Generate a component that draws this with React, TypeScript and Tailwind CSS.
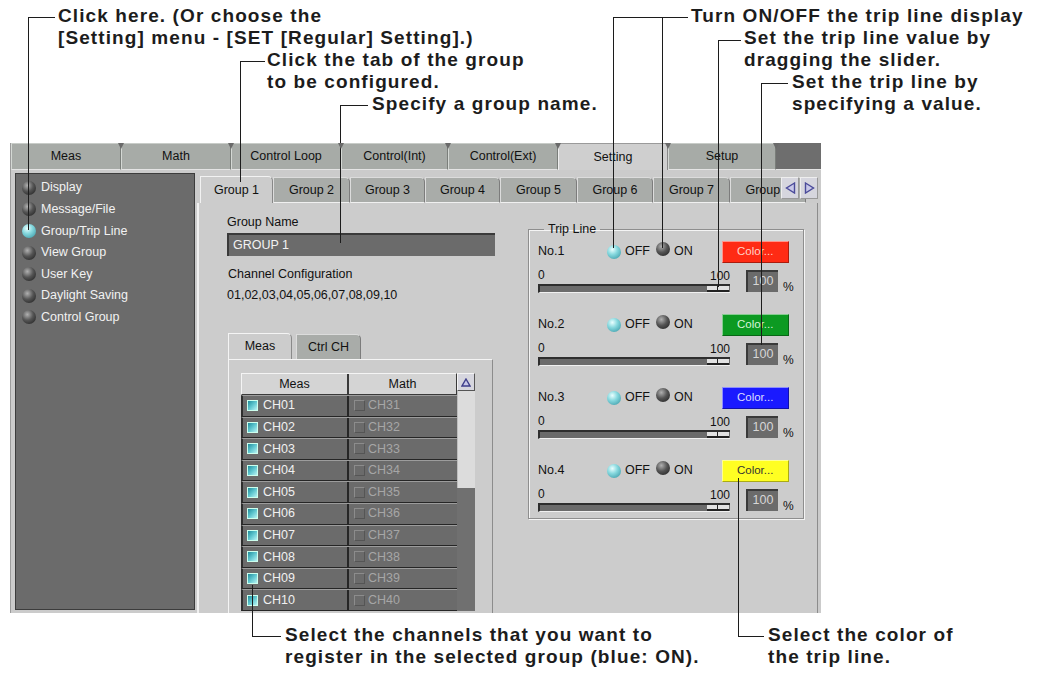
import React from "react";

const topTabs = [
  { label: "Meas", w: "w-[110px]" },
  { label: "Math", w: "w-[110px]" },
  { label: "Control Loop", w: "w-[110px]" },
  { label: "Control(Int)", w: "w-[107px]" },
  { label: "Control(Ext)", w: "w-[110px]" },
  { label: "Setting", w: "w-[110px]", active: true },
  { label: "Setup", w: "w-[108px]" },
];

const menuItems = [
  "Display",
  "Message/File",
  "Group/Trip Line",
  "View Group",
  "User Key",
  "Daylight Saving",
  "Control Group",
];

const groupTabs = [
  { label: "Group 1", w: "w-[73px]", active: true },
  { label: "Group 2", w: "w-[77px]" },
  { label: "Group 3", w: "w-[75px]" },
  { label: "Group 4", w: "w-[75px]" },
  { label: "Group 5", w: "w-[77px]" },
  { label: "Group 6", w: "w-[76px]" },
  { label: "Group 7", w: "w-[77px]" },
  { label: "Group 8", w: "w-[76px]" },
];

const tripLines = [
  { no: "No.1", btn: "bg-[#ff2b14] text-[#ffd2c8]" },
  { no: "No.2", btn: "bg-[#0c9a22] text-[#d8f4d8]" },
  { no: "No.3", btn: "bg-[#1a1aff] text-[#dcdcff]" },
  { no: "No.4", btn: "bg-[#ffff22] text-[#333]" },
];

const channels = ["01", "02", "03", "04", "05", "06", "07", "08", "09", "10"];

function Orb({ on }: { on?: boolean }) {
  return (
    <span
      className={`inline-block w-[14px] h-[14px] rounded-full shrink-0 ${
        on
          ? "bg-[radial-gradient(circle_at_38%_32%,#eaffff_0%,#86d8de_40%,#2f909e_100%)]"
          : "bg-[radial-gradient(circle_at_38%_32%,#b0b0b0_0%,#555_45%,#1a1a1a_100%)]"
      }`}
    />
  );
}

function Check({ on }: { on?: boolean }) {
  return (
    <span
      className={`inline-block w-[11px] h-[11px] shrink-0 ${
        on
          ? "bg-[linear-gradient(135deg,#1f8d9c_0%,#5fc6cf_50%,#b8f4f4_100%)] border border-[#cfe]"
          : "border border-[#8c8c8c] border-r-[#555] border-b-[#555]"
      }`}
    />
  );
}

function Window() {
  return (
    <div className="w-[811px] h-[470px] flex flex-col bg-[#cbcbcb] text-[12.5px] text-[#111] border-l border-[#9c9c9c]">
      {/* top tabs */}
      <div className="flex h-[27px] shrink-0">
        {topTabs.map((t) => (
          <div
            key={t.label}
            className={`relative ${t.w} flex items-center justify-center border-t border-l border-r ${
              t.active
                ? "bg-[#cfcfcf] border-t-[#9a9a9a] border-l-[#eeeeee] border-r-[#8a8a8a]"
                : "bg-[#a7aba7] border-t-[#c8ccc8] border-l-[#d4d8d4] border-r-[#7a7e7a] border-b border-b-[#e4e4e4]"
            }`}
          >
            {t.label}
            <span className="absolute top-[-1px] right-[-4px] z-10 w-0 h-0 border-l-[3px] border-r-[3px] border-t-[6px] border-l-transparent border-r-transparent border-t-[#6a6a6a]" />
          </div>
        ))}
        <div className="flex-1 bg-[#6e6e6e] border-b border-[#e4e4e4]" />
      </div>

      {/* body */}
      <div className="flex flex-1 min-h-0">
        <div className="ml-[4px] mt-[3px] w-[180px] h-[437px] bg-[#6b6b6b] border border-[#3c3c3c] pt-[3px]">
          {menuItems.map((m) => (
            <div key={m} className="h-[21.6px] flex items-center gap-[5px] pl-[6px] text-[#f2f2f2]">
              <Orb on={m === "Group/Trip Line"} />
              <span>{m}</span>
            </div>
          ))}
        </div>

        <div className="ml-[2px] flex-1 flex flex-col pt-[6px] pr-[3px]">
          {/* group tabs */}
          <div className="relative flex h-[27px] pl-[3px] shrink-0 overflow-hidden">
            {groupTabs.map((g) => (
              <div
                key={g.label}
                className={`${g.w} shrink-0 flex items-center justify-center rounded-tr-[5px] border-t border-l border-r ${
                  g.active
                    ? "bg-[#cccccc] border-t-[#f2f2f2] border-l-[#f2f2f2] border-r-[#888]"
                    : "mt-[1px] bg-[#a9aca9] border-t-[#dcdcdc] border-l-[#dcdcdc] border-r-[#7c7c7c] border-b border-b-[#f0f0f0]"
                }`}
              >
                {g.label}
              </div>
            ))}
            <div className="absolute right-0 top-[1px] flex gap-[1px]">
              <div className="w-[18px] h-[22px] bg-[#d6d6de] border border-[#eee] border-r-[#999] border-b-[#999] flex items-center justify-center">
                <svg width="11" height="12" viewBox="0 0 11 12">
                  <path d="M9.5 1 L1.5 6 L9.5 11 Z" fill="#c8c8e8" stroke="#4b4b9a" strokeWidth="1.4" />
                </svg>
              </div>
              <div className="w-[18px] h-[22px] bg-[#d6d6de] border border-[#eee] border-r-[#999] border-b-[#999] flex items-center justify-center">
                <svg width="11" height="12" viewBox="0 0 11 12">
                  <path d="M1.5 1 L9.5 6 L1.5 11 Z" fill="#c8c8e8" stroke="#4b4b9a" strokeWidth="1.4" />
                </svg>
              </div>
            </div>
          </div>

          {/* group panel */}
          <div className="flex-1 flex bg-[#cccccc] border-l-2 border-[#f0f0f0] border-r border-r-[#8c8c8c] min-h-0 overflow-hidden">
            {/* left column */}
            <div className="ml-[28px] w-[268px] pt-[11px] flex flex-col">
              <div className="h-[16px] leading-[16px]">Group Name</div>
              <div className="mt-[3px] h-[23px] bg-[#6b6b6b] border-t-2 border-l-2 border-[#3a3a3a] text-[#f2f2f2] flex items-center pl-[4px]">
                GROUP 1
              </div>
              <div className="mt-[10px] h-[16px] leading-[16px] pl-[1px]">Channel Configuration</div>
              <div className="mt-[5px] h-[16px] leading-[16px]">01,02,03,04,05,06,07,08,09,10</div>

              <div className="mt-[30px] flex items-end h-[26px] pl-[1px]">
                <div className="w-[64px] h-[26px] bg-[#cccccc] border-t border-l border-r border-t-[#f4f4f4] border-l-[#f4f4f4] border-r-[#8a8a8a] rounded-tr-[5px] flex items-center justify-center">
                  Meas
                </div>
                <div className="ml-[4px] w-[65px] h-[25px] bg-[#a9aca9] border-t border-l border-r border-t-[#dcdcdc] border-l-[#dcdcdc] border-r-[#7c7c7c] rounded-tr-[5px] flex items-center justify-center">
                  Ctrl CH
                </div>
              </div>
              <div className="ml-[1px] w-[265px] flex-1 border-t border-l border-r border-t-[#f4f4f4] border-l-[#f4f4f4] border-r-[#8c8c8c] pl-[12px] pt-[13px]">
                <div className="w-[234px] flex">
                  <div className="w-[216px]">
                    <div className="flex h-[22px] bg-[#d4d4d4] border border-[#3a3a3a] border-t-[#f4f4f4] border-l-[#f4f4f4]">
                      <div className="w-[107px] flex items-center justify-center border-r-2 border-[#3a3a3a]">Meas</div>
                      <div className="flex-1 flex items-center justify-center">Math</div>
                    </div>
                    {channels.map((c, i) => (
                      <div key={c} className="flex h-[21.6px] bg-[#6b6b6b] border-t border-t-[#9c9c9c] border-b border-b-[#262626] border-l-2 border-l-[#2e2e2e]">
                        <div className="w-[106px] flex items-center gap-[5px] pl-[4px] text-[#f0f0f0] border-r-2 border-[#262626]">
                          <Check on />
                          <span>CH{c}</span>
                        </div>
                        <div className="flex-1 flex items-center gap-[3px] pl-[5px] text-[#a6a6a6]">
                          <Check />
                          <span>CH{31 + i}</span>
                        </div>
                      </div>
                    ))}
                  </div>
                  <div className="w-[18px] flex flex-col">
                    <div className="h-[18px] bg-[#d6d6de] border border-[#f4f4f4] border-r-[#555] border-b-[#555] flex items-center justify-center">
                      <svg width="10" height="9" viewBox="0 0 10 9">
                        <path d="M5 1 L9 8 L1 8 Z" fill="#c8c8e8" stroke="#3e3e8a" strokeWidth="1.4" />
                      </svg>
                    </div>
                    <div className="h-[97px] bg-[#dcdcdc] border-l border-[#bdbdbd]" />
                    <div className="flex-1 bg-[#707070]" />
                  </div>
                </div>
              </div>
            </div>

            {/* trip line */}
            <fieldset className="ml-[33px] mt-[17px] w-[275px] h-[299px] border border-[#8e8e8e] shadow-[inset_1px_1px_0_#f4f4f4,1px_1px_0_#f4f4f4] px-[9px] pt-[2px]">
              <legend className="ml-[6px] px-[4px] text-[#111]">Trip Line</legend>
              <div className="flex flex-col gap-[20px]">
                {tripLines.map((t) => (
                  <div key={t.no}>
                    <div className="flex items-center h-[22px]">
                      <span className="w-[69px]">{t.no}</span>
                      <Orb on />
                      <span className="ml-[4px]">OFF</span>
                      <span className="ml-[6px]">
                        <Orb />
                      </span>
                      <span className="ml-[4px]">ON</span>
                      <div
                        className={`ml-auto mr-[5px] w-[67px] h-[22px] ${t.btn} flex items-center justify-center text-[11.5px] border border-[#ffffff80] border-r-[#00000055] border-b-[#00000055]`}
                      >
                        Color...
                      </div>
                    </div>
                    <div className="flex items-start">
                      <div className="w-[192px]">
                        <div className="mt-[5px] flex justify-between h-[14px] leading-[14px] text-[12px]">
                          <span>0</span>
                          <span className="translate-y-[1px]">100</span>
                        </div>
                        <div className="relative mt-[2px] h-[9px] bg-[#6b6b6b] border-t-2 border-l-2 border-[#2e2e2e] border-b border-b-[#f0f0f0]">
                          <div className="absolute right-[1px] top-[0px] w-[22px] h-[6px] bg-[#e2e2e2] border-b-2 border-[#222]">
                            <span className="absolute left-[10px] top-0 w-[1px] h-[4px] bg-[#222]" />
                          </div>
                        </div>
                      </div>
                      <div className="ml-[16px] mt-[7px] w-[32px] h-[22px] bg-[#6b6b6b] border-t-2 border-l-2 border-[#3a3a3a] text-[#d6d6d6] flex items-center justify-center">
                        100
                      </div>
                      <span className="ml-[5px] mt-[17px] text-[12px] leading-[14px]">%</span>
                    </div>
                  </div>
                ))}
              </div>
            </fieldset>
          </div>
        </div>
      </div>
    </div>
  );
}

function Note({ x, y, lines }: { x: number; y: number; lines: string[] }) {
  return (
    <div
      className="absolute font-bold text-[19px] leading-[22px] tracking-[1.1px] text-[#1c1c1c] whitespace-nowrap"
      style={{ left: x, top: y }}
    >
      {lines.map((l) => (
        <div key={l}>{l}</div>
      ))}
    </div>
  );
}

function HLine({ x, y, w }: { x: number; y: number; w: number }) {
  return <div className="absolute h-[1px] bg-[#1c1c1c]" style={{ left: x, top: y, width: w }} />;
}

function VLine({ x, y, h }: { x: number; y: number; h: number }) {
  return <div className="absolute w-[1px] bg-[#1c1c1c]" style={{ left: x, top: y, height: h }} />;
}

function Callouts() {
  return (
    <>
      <Note x={58} y={5} lines={["Click here. (Or choose the", "[Setting] menu - [SET [Regular] Setting].)"]} />
      <HLine x={28} y={17} w={27} />
      <VLine x={28} y={17} h={213} />

      <Note x={267} y={49} lines={["Click the tab of the group", "to be configured."]} />
      <HLine x={240} y={61} w={25} />
      <VLine x={240} y={61} h={121} />

      <Note x={372} y={93} lines={["Specify a group name."]} />
      <HLine x={340} y={105} w={28} />
      <VLine x={340} y={105} h={138} />

      <Note x={691} y={5} lines={["Turn ON/OFF the trip line display"]} />
      <HLine x={613} y={17} w={75} />
      <VLine x={613} y={17} h={231} />
      <VLine x={662} y={17} h={231} />

      <Note x={744} y={27} lines={["Set the trip line value by", "dragging the slider."]} />
      <HLine x={718} y={40} w={23} />
      <VLine x={718} y={40} h={247} />

      <Note x={792} y={71} lines={["Set the trip line by", "specifying a value."]} />
      <HLine x={761} y={83} w={27} />
      <VLine x={761} y={83} h={262} />

      <Note x={285} y={624} lines={["Select the channels that you want to", "register in the selected group (blue: ON)."]} />
      <VLine x={252} y={585} h={51} />
      <HLine x={252} y={636} w={29} />

      <Note x={768} y={624} lines={["Select the color of", "the trip line."]} />
      <VLine x={738} y={478} h={158} />
      <HLine x={738} y={636} w={26} />
    </>
  );
}

export default function App() {
  return (
    <div className="relative w-[1037px] h-[673px] bg-white overflow-hidden font-['Liberation_Sans',Arial,sans-serif]">
      <div className="pt-[143px] pl-[10px]">
        <Window />
      </div>
      <Callouts />
    </div>
  );
}
